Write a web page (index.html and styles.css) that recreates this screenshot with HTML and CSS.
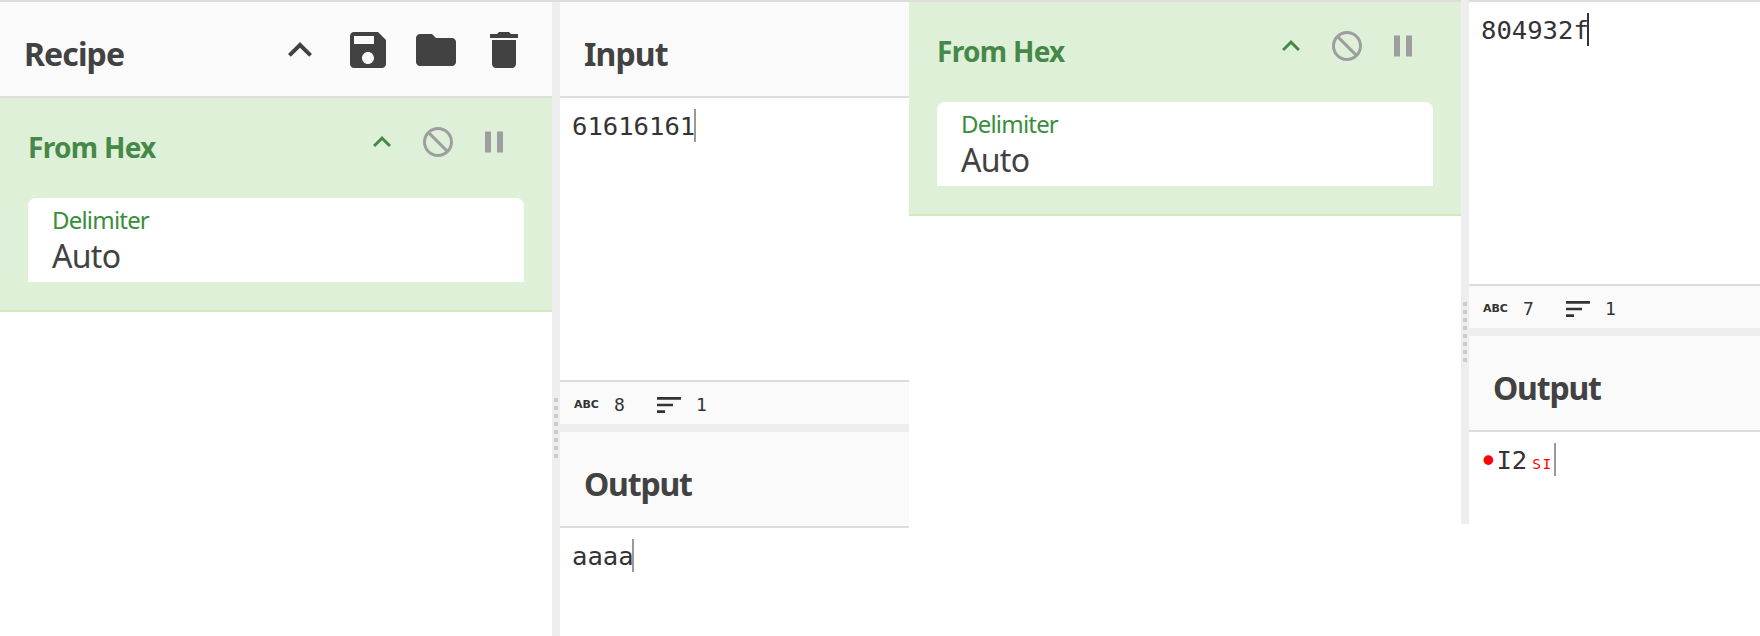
FILE: index.html
```
<!DOCTYPE html>
<html lang="en">
<head>
<meta charset="utf-8">
<title>Recipe</title>
<link rel="stylesheet" href="styles.css">
</head>
<body>
<svg class="defs" width="0" height="0">
  <symbol id="less" viewBox="0 0 24 24"><path d="M12 8l-6 6 1.41 1.41L12 10.83l4.59 4.58L18 14z"/></symbol>
  <symbol id="save" viewBox="0 0 24 24"><path d="M17 3H5c-1.11 0-2 .9-2 2v14c0 1.1.89 2 2 2h14c1.1 0 2-.9 2-2V7l-4-4zm-5 16c-1.66 0-3-1.34-3-3s1.34-3 3-3 3 1.34 3 3-1.34 3-3 3zm3-10H5V5h10v4z"/></symbol>
  <symbol id="folder" viewBox="0 0 24 24"><path d="M10 4H4c-1.1 0-1.99.9-1.99 2L2 18c0 1.1.9 2 2 2h16c1.1 0 2-.9 2-2V8c0-1.1-.9-2-2-2h-8l-2-2z"/></symbol>
  <symbol id="trash" viewBox="0 0 24 24"><path d="M6 19c0 1.1.9 2 2 2h8c1.1 0 2-.9 2-2V7H6v12zM19 4h-3.500l-1-1h-5l-1 1H5v2h14V4z"/></symbol>
  <symbol id="block" viewBox="0 0 24 24"><path d="M12 2C6.480 2 2 6.480 2 12s4.480 10 10 10 10-4.480 10-10S17.520 2 12 2zm0 18c-4.420 0-8-3.580-8-8 0-1.850.63-3.550 1.690-4.900L16.900 18.310C15.550 19.370 13.850 20 12 20zm6.310-3.100L7.100 5.690C8.450 4.630 10.150 4 12 4c4.420 0 8 3.580 8 8 0 1.850-.63 3.550-1.690 4.900z"/></symbol>
  <symbol id="pause" viewBox="0 0 24 24"><path d="M6 19h4V5H6v14zm8-14v14h4V5h-4z"/></symbol>
  <symbol id="sort" viewBox="0 0 24 24"><path d="M3 18h6v-2H3v2zM3 6v2h18V6H3zm0 7h12v-2H3v2z"/></symbol>
</svg>
<main class="board">
  <section class="shot first">
    <div class="recipe">
      <header class="bar">
        <h1 class="title">Recipe</h1>
        <div class="tools">
          <svg><use href="#less"/></svg>
          <svg><use href="#save"/></svg>
          <svg><use href="#folder"/></svg>
          <svg><use href="#trash"/></svg>
        </div>
      </header>
      <article class="op">
        <div class="op-head">
          <h2 class="op-name">From Hex</h2>
          <div class="op-tools">
            <svg class="green"><use href="#less"/></svg>
            <svg><use href="#block"/></svg>
            <svg><use href="#pause"/></svg>
          </div>
        </div>
        <div class="field">
          <div class="label">Delimiter</div>
          <div class="value">Auto</div>
        </div>
      </article>
    </div>
    <div class="gutter"><i class="grip"></i></div>
    <div class="io">
      <header class="bar"><h1 class="title">Input</h1></header>
      <div class="editor input"><span>61616161</span><i class="caret"></i></div>
      <div class="status"><b class="abc">ABC</b><span class="chars">8</span><svg><use href="#sort"/></svg><span>1</span></div>
      <header class="bar"><h1 class="title output-title">Output</h1></header>
      <div class="editor"><span>aaaa</span><i class="caret"></i></div>
    </div>
  </section>
  <section class="shot second">
    <div class="recipe">
      <article class="op">
        <div class="op-head">
          <h2 class="op-name">From Hex</h2>
          <div class="op-tools">
            <svg class="green"><use href="#less"/></svg>
            <svg><use href="#block"/></svg>
            <svg><use href="#pause"/></svg>
          </div>
        </div>
        <div class="field">
          <div class="label">Delimiter</div>
          <div class="value">Auto</div>
        </div>
      </article>
    </div>
    <div class="gutter"><i class="grip"></i></div>
    <div class="io">
      <div class="editor input"><span>804932f</span><i class="caret active"></i></div>
      <div class="status"><b class="abc">ABC</b><span class="chars">7</span><svg><use href="#sort"/></svg><span>1</span></div>
      <header class="bar"><h1 class="title output-title">Output</h1></header>
      <div class="editor"><span class="dot">•</span><span>I2</span><span class="control">SI</span><i class="caret"></i></div>
    </div>
  </section>
</main>
</body>
</html>
```

FILE: styles.css
```
* { box-sizing: border-box; }
body {
  margin: 0;
  background: #fff;
  color: #424242;
  font-family: "Noto Sans", sans-serif;
}
.defs { position: absolute; }
svg { display: block; fill: currentColor; flex: none; }
h1, h2 { margin: 0; }

.board { display: flex; width: 1760px; height: 636px; overflow: hidden; }
.shot { display: flex; border-top: 2px solid #ddd; }
.first { width: 909px; height: 636px; }
.second { width: 851px; height: 524px; }
.recipe { width: 552px; flex: none; }
.io { flex: 1; min-width: 0; }

.gutter { width: 8px; flex: none; background: #eee; padding-left: 2px; }
.grip {
  display: block;
  width: 4px;
  height: 60px;
  background: repeating-linear-gradient(#ccc 0 4px, transparent 4px 8px);
}
.first .grip { margin-top: 396px; }
.second .gutter { margin-top: -2px; }
.second .grip { margin-top: 302px; }

.bar {
  height: 96px;
  display: flex;
  justify-content: space-between;
  background: #fafafa;
  border-bottom: 2px solid #ddd;
  padding: 24px 24px 0;
}
.title { font-size: 32px; line-height: 44px; padding-top: 6px; letter-spacing: -.9px; }
.output-title { letter-spacing: -1.2px; }
.tools { display: flex; gap: 20px; }
.tools svg { width: 48px; height: 48px; }

.op { height: 214px; background: #dff0d8; border-bottom: 2px solid #d3e8c0; padding: 26px 28px 0; }
.op-head { display: flex; justify-content: space-between; height: 74px; padding-right: 12px; }
.op-name { font-size: 28px; line-height: 38px; padding-top: 4px; letter-spacing: -.7px; color: #468847; }
.op-tools { display: flex; gap: 20px; color: #9e9e9e; }
.op-tools svg { width: 36px; height: 36px; }
.op-tools .green { color: #468847; }
.field { height: 84px; background: #fff; border-radius: 8px 8px 0 0; padding: 4px 24px 0; }
.label { font-size: 24px; line-height: 36px; letter-spacing: -.8px; color: #388e3c; }
.value { font-size: 32px; line-height: 36px; letter-spacing: -.7px; }

.editor {
  display: flex;
  align-items: flex-start;
  padding: 11px 0 0 12px;
  font: 25.58px/35px "DejaVu Sans Mono", monospace;
  color: #333;
}
.input { height: 282px; }
.caret { width: 2px; height: 33px; margin-left: -1.5px; background: #999; }
.caret.active { background: #333; }
.dot { width: 15.4px; color: red; font-size: 33px; line-height: 37px; text-indent: -2.5px; }
.control { color: red; font-size: 14.5px; line-height: 42px; letter-spacing: 1.5px; padding: 0 3px 0 5px; }

.status {
  height: 52px;
  display: flex;
  align-items: center;
  background: #fafafa;
  border-top: 2px solid #ddd;
  border-bottom: 8px solid #eee;
  padding: 3px 0 0 14px;
  font: 18px/24px "DejaVu Sans Mono", monospace;
  color: #333;
}
.abc { font: bold 11px/24px "DejaVu Sans", sans-serif; letter-spacing: -.1px; width: 40px; }
.chars { width: 39px; }
.status svg { width: 32px; height: 32px; margin-right: 11px; }
```
